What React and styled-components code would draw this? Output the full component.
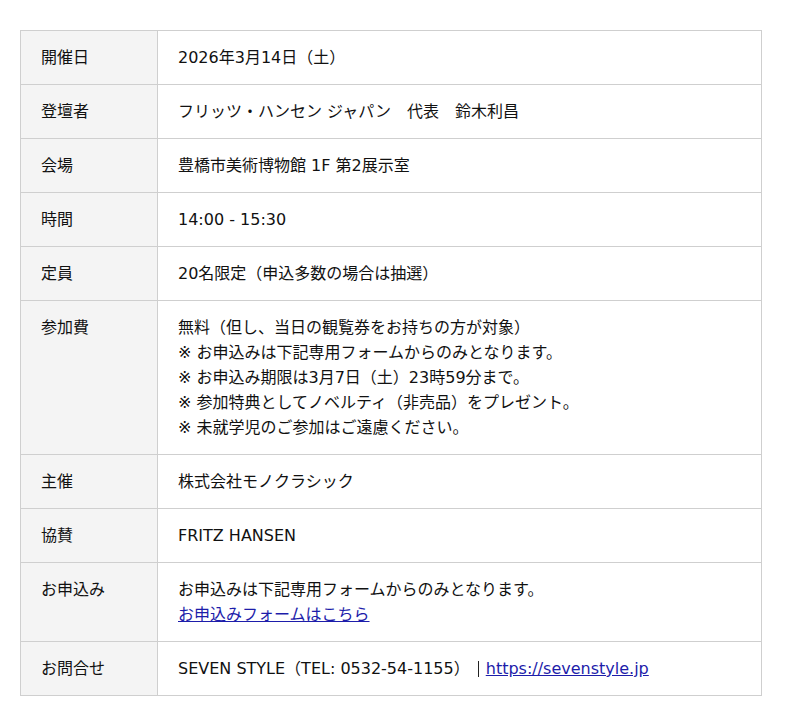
import styled, { createGlobalStyle } from "styled-components";

const GlobalStyle = createGlobalStyle`
  body {
    margin: 0;
    background: #fff;
    font-family: "DejaVu Sans", "Noto Sans CJK JP", sans-serif;
    color: #111;
  }
`;

const Wrapper = styled.div`
  padding: 30px 38px 30px 20px;
`;

const Table = styled.table`
  width: 100%;
  border-collapse: collapse;
  font-size: 16px;
  line-height: 25px;
`;

const Label = styled.th`
  width: 96px;
  padding: 14px 20px;
  background: #f4f4f4;
  border: 1px solid #cfcfcf;
  font-weight: normal;
  text-align: left;
  vertical-align: top;
`;

const Value = styled.td`
  padding: 14px 20px;
  border: 1px solid #cfcfcf;
  vertical-align: top;
`;

/* full-width vertical bar drawn as a crisp 1px line */
const Divider = styled.span`
  display: inline-block;
  width: 16px;
  height: 16px;
  vertical-align: -3px;
  background: linear-gradient(#222, #222) no-repeat 8px 0 / 1px 100%;
`;

const Link = styled.a`
  color: #1d1daa;
  text-decoration: underline;
`;

const rows = [
  ["開催日", "2026年3月14日（土）"],
  ["登壇者", "フリッツ・ハンセン ジャパン　代表　鈴木利昌"],
  ["会場", "豊橋市美術博物館 1F 第2展示室"],
  ["時間", "14:00 - 15:30"],
  ["定員", "20名限定（申込多数の場合は抽選）"],
  [
    "参加費",
    <>
      無料（但し、当日の観覧券をお持ちの方が対象）
      <br />※ お申込みは下記専用フォームからのみとなります。
      <br />※ お申込み期限は3月7日（土）23時59分まで。
      <br />※ 参加特典としてノベルティ（非売品）をプレゼント。
      <br />※ 未就学児のご参加はご遠慮ください。
    </>,
  ],
  ["主催", "株式会社モノクラシック"],
  ["協賛", "FRITZ HANSEN"],
  [
    "お申込み",
    <>
      お申込みは下記専用フォームからのみとなります。
      <br />
      <Link href="#">お申込みフォームはこちら</Link>
    </>,
  ],
  [
    "お問合せ",
    <>
      SEVEN STYLE（TEL: 0532-54-1155）<Divider aria-label="｜" />
      <Link href="#">https://sevenstyle.jp</Link>
    </>,
  ],
];

export default function App() {
  return (
    <Wrapper>
      <GlobalStyle />
      <Table>
        <tbody>
          {rows.map(([label, value]) => (
            <tr key={label}>
              <Label>{label}</Label>
              <Value>{value}</Value>
            </tr>
          ))}
        </tbody>
      </Table>
    </Wrapper>
  );
}
